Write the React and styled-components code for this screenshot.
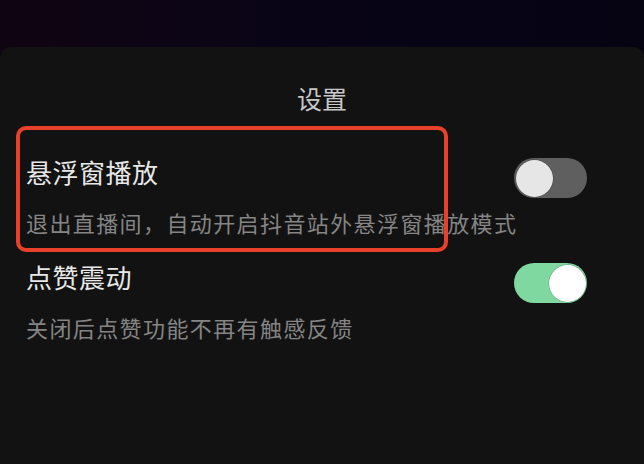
import React, { useState } from "react";
import styled, { createGlobalStyle } from "styled-components";

const Global = createGlobalStyle`
  html, body { margin: 0; padding: 0; }
  body {
    width: 644px;
    height: 464px;
    overflow: hidden;
    background: linear-gradient(90deg, #0f0411 0%, #0b0516 35%, #070415 60%, #060413 100%);
    font-family: "Noto Sans CJK SC", "Noto Sans", sans-serif;
  }
`;

const Page = styled.div`
  display: flex;
  flex-direction: column;
  height: 464px;
`;

const Backdrop = styled.div`
  height: 47px;
  flex: none;
`;

const Sheet = styled.div`
  flex: 1;
  background: #121212;
  border-radius: 10px 10px 0 0;
  padding-top: 33px;
  display: flex;
  flex-direction: column;
`;

const Title = styled.div`
  text-align: center;
  color: #c8c8c8;
  font-size: 25px;
  line-height: 36px;
  height: 36px;
`;

const Item = styled.div`
  position: relative;
  padding: 0 57px 0 26px;
  margin-top: ${(p) => p.$top}px;
`;

const Header = styled.div`
  display: flex;
  align-items: center;
  justify-content: space-between;
  height: 36px;
`;

const Label = styled.div`
  color: #e8e8e8;
  font-size: 26px;
  line-height: 36px;
  letter-spacing: 0.5px;
`;

const Desc = styled.div`
  color: #858585;
  font-size: 22px;
  line-height: 32px;
  letter-spacing: 1.4px;
  margin-top: 16px;
  white-space: nowrap;
`;

const Highlight = styled.div`
  position: absolute;
  left: 16px;
  top: -28px;
  width: 432px;
  height: 126px;
  box-sizing: border-box;
  border: 4px solid #e8402b;
  border-radius: 10px;
  pointer-events: none;
`;

const Track = styled.button`
  position: relative;
  flex: none;
  width: 73px;
  height: 40px;
  margin-top: 12px;
  padding: 0;
  border: none;
  border-radius: 20px;
  background: ${(p) => (p.$on ? "#7fd8a0" : "#5f5f5f")};
  cursor: pointer;
`;

const Knob = styled.span`
  position: absolute;
  top: 1.5px;
  left: ${(p) => (p.$on ? "34.5px" : "1.5px")};
  width: 37px;
  height: 37px;
  border-radius: 50%;
  background: ${(p) => (p.$on ? "#ffffff" : "#e6e6e6")};
  box-shadow: 0 0 0 0.5px rgba(0, 0, 0, 0.25);
`;

function Toggle({ on, onClick }) {
  return (
    <Track $on={on} onClick={onClick} aria-pressed={on}>
      <Knob $on={on} />
    </Track>
  );
}

export default function App() {
  const [floatOn, setFloatOn] = useState(false);
  const [vibrateOn, setVibrateOn] = useState(true);
  return (
    <Page>
      <Global />
      <Backdrop />
      <Sheet>
        <Title>设置</Title>
        <Item $top={38}>
          <Highlight />
          <Header>
            <Label>悬浮窗播放</Label>
            <Toggle on={floatOn} onClick={() => setFloatOn(!floatOn)} />
          </Header>
          <Desc>退出直播间，自动开启抖音站外悬浮窗播放模式</Desc>
        </Item>
        <Item $top={21}>
          <Header>
            <Label>点赞震动</Label>
            <Toggle on={vibrateOn} onClick={() => setVibrateOn(!vibrateOn)} />
          </Header>
          <Desc>关闭后点赞功能不再有触感反馈</Desc>
        </Item>
      </Sheet>
    </Page>
  );
}
